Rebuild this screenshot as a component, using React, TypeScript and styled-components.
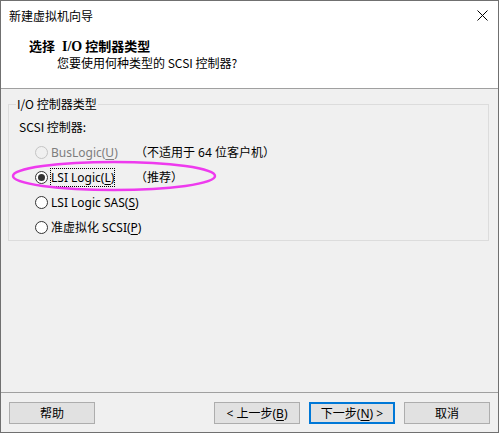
import React from "react";
import styled, { createGlobalStyle } from "styled-components";

const Global = createGlobalStyle`
  html, body { margin: 0; padding: 0; background: #ffffff; }
  body { font-family: "Noto Sans", "Noto Sans CJK SC", sans-serif; font-size: 12px; color: #000; }
  * { box-sizing: border-box; }
`;

const Window = styled.div`
  position: relative;
  width: 499px;
  height: 433px;
  border: 1px solid #707070;
  display: flex;
  flex-direction: column;
  background: #f0f0f0;
`;

const TitleBar = styled.div`
  height: 29px;
  background: #ffffff;
  display: flex;
  align-items: center;
  justify-content: space-between;
  padding: 0 10px 0 8px;
  font-family: "Noto Sans CJK SC", sans-serif;
  font-size: 12px;
  line-height: 16px;
`;

const CloseButton = styled.div`
  width: 12px;
  height: 12px;
  display: flex;
  align-items: center;
  justify-content: center;
`;

const Header = styled.div`
  background: #ffffff;
  border-bottom: 1px solid #a0a0a0;
  padding: 8px 0 17px 0;
  display: flex;
  flex-direction: column;
`;

const HeaderTitle = styled.div`
  padding-left: 28px;
  font-family: "Noto Sans CJK SC", sans-serif;
  font-weight: bold;
  font-size: 13px;
  line-height: 16px;
`;

const SerifPart = styled.span`
  font-family: "Liberation Serif", "Noto Sans CJK SC", serif;
  font-size: 14px;
  margin: 0 3px 0 7px;
`;

const HeaderSub = styled.div`
  padding-left: 56px;
  font-size: 12px;
  line-height: 16px;
  font-family: "Noto Sans CJK SC", sans-serif;
`;

const Body = styled.div`
  flex: 1;
  display: flex;
  flex-direction: column;
`;

const Group = styled.fieldset`
  position: relative;
  margin: 7px 9px 0 7px;
  padding: 7px 0 0 10px;
  border: 1px solid #dcdcdc;
  min-width: 0;
`;

const Legend = styled.legend`
  margin-left: -3px;
  padding: 0 1px;
  font-size: 12px;
  line-height: 16px;
  font-family: "Noto Sans CJK SC", sans-serif;
`;

const GroupLabel = styled.div`
  font-size: 12px;
  line-height: 16px;
  margin-bottom: 5px;
  font-family: "Noto Sans CJK SC", sans-serif;
`;

const Row = styled.div`
  height: 25px;
  display: flex;
  align-items: center;
  padding-left: 16px;
`;

const RadioCircle = styled.span<{ $disabled?: boolean; $checked?: boolean }>`
  width: 13px;
  height: 13px;
  border-radius: 50%;
  border: 1px solid ${(p) => (p.$disabled ? "#c4c4c4" : "#333333")};
  background: ${(p) => (p.$disabled ? "#f0f0f0" : "#ffffff")};
  display: flex;
  align-items: center;
  justify-content: center;
  flex: none;
  &::after {
    content: "";
    display: ${(p) => (p.$checked ? "block" : "none")};
    width: 7px;
    height: 7px;
    border-radius: 50%;
    background: #333333;
  }
`;

const RadioLabel = styled.span<{ $disabled?: boolean }>`
  margin-left: 3px;
  width: 84px;
  flex: none;
  display: flex;
  align-items: center;
  color: ${(p) => (p.$disabled ? "#7d7d7d" : "#000000")};
  font-size: 12px;
  line-height: 15px;
  font-family: "Noto Sans", "Noto Sans CJK SC", sans-serif;
`;

const FocusBox = styled.span<{ $focused?: boolean }>`
  outline: ${(p) => (p.$focused ? "1px dotted #000" : "none")};
  outline-offset: 0;
  padding: 1px 0 1px 0;
  white-space: nowrap;
`;

const Note = styled.span`
  font-size: 12px;
  line-height: 15px;
  white-space: nowrap;
  font-family: "Noto Sans", "Noto Sans CJK SC", sans-serif;
`;

const Key = styled.span`
  text-decoration: underline;
  text-underline-offset: 2px;
`;

const Highlight = styled.svg`
  position: absolute;
  left: -1px;
  top: 47px;
  pointer-events: none;
`;

const Spacer = styled.div`
  flex: 1;
`;

const Footer = styled.div`
  border-top: 1px solid #a0a0a0;
  padding: 9px 8px 8px 8px;
  display: flex;
  gap: 9px;
`;

const Button = styled.div<{ $default?: boolean }>`
  width: 86px;
  height: 22px;
  background: #e1e1e1;
  border: ${(p) => (p.$default ? "2px solid #0078d7" : "1px solid #adadad")};
  display: flex;
  align-items: center;
  justify-content: center;
  font-size: 12px;
  font-family: "Noto Sans", "Noto Sans CJK SC", sans-serif;
  line-height: 15px;
`;

const FooterGap = styled.div`
  flex: 1;
`;

type Opt = {
  label: React.ReactNode;
  note?: string;
  disabled?: boolean;
  checked?: boolean;
  focused?: boolean;
};

const options: Opt[] = [
  { label: <>BusLogic(<Key>U</Key>)</>, note: "（不适用于 64 位客户机）", disabled: true },
  { label: <>LSI Logic(<Key>L</Key>)</>, note: "（推荐）", checked: true, focused: true },
  { label: <>LSI Logic SAS(<Key>S</Key>)</> },
  { label: <>准虚拟化 SCSI(<Key>P</Key>)</> },
];

export default function App() {
  return (
    <>
      <Global />
      <Window>
        <TitleBar>
          <span>新建虚拟机向导</span>
          <CloseButton>
            <svg width="11" height="11" viewBox="0 0 11 11">
              <path d="M0.5 0.5 L10.5 10.5 M10.5 0.5 L0.5 10.5" stroke="#000" strokeWidth="1" fill="none" />
            </svg>
          </CloseButton>
        </TitleBar>
        <Header>
          <HeaderTitle>
            选择<SerifPart>I/O</SerifPart>控制器类型
          </HeaderTitle>
          <HeaderSub>您要使用何种类型的 SCSI 控制器?</HeaderSub>
        </Header>
        <Body>
          <Group>
            <Legend>I/O 控制器类型</Legend>
            <GroupLabel>SCSI 控制器:</GroupLabel>
            {options.map((o, i) => (
              <Row key={i}>
                <RadioCircle $disabled={o.disabled} $checked={o.checked} />
                <RadioLabel $disabled={o.disabled}>
                  <FocusBox $focused={o.focused}>{o.label}</FocusBox>
                </RadioLabel>
                {o.note && <Note>{o.note}</Note>}
              </Row>
            ))}
            <Highlight width="212" height="34" viewBox="0 0 212 34">
              <ellipse cx="106" cy="17" rx="101" ry="14" stroke="#ee3aee" strokeWidth="2.5" fill="none" />
            </Highlight>
          </Group>
          <Spacer />
          <Footer>
            <Button>帮助</Button>
            <FooterGap />
            <Button>&lt; 上一步(<Key>B</Key>)</Button>
            <Button $default>下一步(<Key>N</Key>) &gt;</Button>
            <Button>取消</Button>
          </Footer>
        </Body>
      </Window>
    </>
  );
}
